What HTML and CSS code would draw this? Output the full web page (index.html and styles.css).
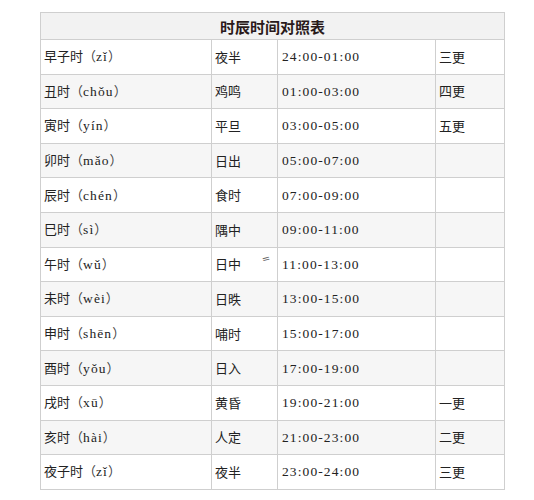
FILE: index.html
```html
<!DOCTYPE html>
<html lang="zh-CN">
<head>
<meta charset="utf-8">
<title>时辰时间对照表</title>
<link rel="stylesheet" href="styles.css">
</head>
<body>
<div class="page">
<table class="shichen">
<colgroup>
<col class="c1"><col class="c2"><col class="c3"><col class="c4">
</colgroup>
<thead>
<tr><th colspan="4">时辰时间对照表</th></tr>
</thead>
<tbody>
<tr><td>早子时<span class="par">（</span><span class="lat">zǐ</span><span class="par">）</span></td><td>夜半</td><td><span class="lat">24:00-01:00</span></td><td>三更</td></tr>
<tr><td>丑时<span class="par">（</span><span class="lat">chǒu</span><span class="par">）</span></td><td>鸡鸣</td><td><span class="lat">01:00-03:00</span></td><td>四更</td></tr>
<tr><td>寅时<span class="par">（</span><span class="lat">yín</span><span class="par">）</span></td><td>平旦</td><td><span class="lat">03:00-05:00</span></td><td>五更</td></tr>
<tr><td>卯时<span class="par">（</span><span class="lat">mǎo</span><span class="par">）</span></td><td>日出</td><td><span class="lat">05:00-07:00</span></td><td></td></tr>
<tr><td>辰时<span class="par">（</span><span class="lat">chén</span><span class="par">）</span></td><td>食时</td><td><span class="lat">07:00-09:00</span></td><td></td></tr>
<tr><td>巳时<span class="par">（</span><span class="lat">sì</span><span class="par">）</span></td><td>隅中</td><td><span class="lat">09:00-11:00</span></td><td></td></tr>
<tr><td>午时<span class="par">（</span><span class="lat">wǔ</span><span class="par">）</span></td><td class="mark-cell">日中<span class="mark">=</span></td><td><span class="lat">11:00-13:00</span></td><td></td></tr>
<tr><td>未时<span class="par">（</span><span class="lat">wèi</span><span class="par">）</span></td><td>日昳</td><td><span class="lat">13:00-15:00</span></td><td></td></tr>
<tr><td>申时<span class="par">（</span><span class="lat">shēn</span><span class="par">）</span></td><td>哺时</td><td><span class="lat">15:00-17:00</span></td><td></td></tr>
<tr><td>酉时<span class="par">（</span><span class="lat">yǒu</span><span class="par">）</span></td><td>日入</td><td><span class="lat">17:00-19:00</span></td><td></td></tr>
<tr><td>戌时<span class="par">（</span><span class="lat">xū</span><span class="par">）</span></td><td>黄昏</td><td><span class="lat">19:00-21:00</span></td><td>一更</td></tr>
<tr><td>亥时<span class="par">（</span><span class="lat">hài</span><span class="par">）</span></td><td>人定</td><td><span class="lat">21:00-23:00</span></td><td>二更</td></tr>
<tr><td>夜子时<span class="par">（</span><span class="lat">zǐ</span><span class="par">）</span></td><td>夜半</td><td><span class="lat">23:00-24:00</span></td><td>三更</td></tr>
</tbody>
</table>
</div>
</body>
</html>
```
FILE: styles.css
```css
html, body {
  margin: 0;
  padding: 0;
  background: #ffffff;
}

.page {
  padding: 12px 0 0 40px;
}

.shichen {
  border-collapse: collapse;
  table-layout: fixed;
  width: 464px;
  font-family: "Noto Sans CJK SC", "Noto Sans", sans-serif;
  font-size: 13px;
  color: #222;
}

.c1 { width: 171px; }
.c2 { width: 66px; }
.c3 { width: 158px; }
.c4 { width: 69px; }

.shichen th,
.shichen td {
  border: 1px solid #cfcfcf;
  text-align: left;
  vertical-align: middle;
  padding: 0 0 0 3px;
  white-space: nowrap;
}

.shichen th {
  height: 26px;
  background: #f2f2f2;
  text-align: center;
  font-weight: bold;
  font-size: 15px;
  color: #2a1a1a;
  padding: 0;
}

.shichen td {
  height: 33.6px;
  line-height: 16px;
}

.shichen tbody tr:nth-child(even) td {
  background: #f6f6f6;
}

.shichen td:nth-child(3) {
  padding-left: 4px;
}

.par {
  color: #444;
}

.lat {
  font-family: "Liberation Serif", "DejaVu Serif", serif;
  font-size: 13.5px;
  letter-spacing: 1.1px;
  color: #222;
}

.mark-cell {
  position: relative;
}

.mark {
  position: absolute;
  right: 7px;
  top: 6px;
  font-family: "DejaVu Sans", sans-serif;
  font-size: 10px;
  line-height: 10px;
  color: #666;
  transform: rotate(-14deg);
}
```
